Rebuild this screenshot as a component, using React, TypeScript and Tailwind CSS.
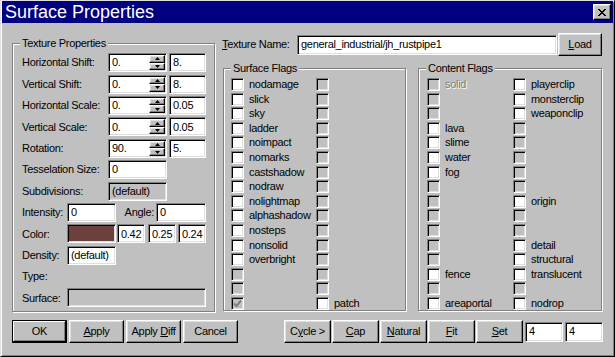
import type { ReactNode } from 'react';

// win95 bevels
const sunken =
  'border border-t-[#808080] border-l-[#808080] border-r-white border-b-white shadow-[inset_1px_1px_0_#000,inset_-1px_-1px_0_#dfdfdf]';
const raised =
  'border border-t-white border-l-white border-r-black border-b-black shadow-[inset_-1px_-1px_0_#808080,inset_1px_1px_0_#dfdfdf]';

type Flag = { label?: string; enabled?: boolean; checked?: boolean };
const on = (label: string): Flag => ({ label, enabled: true });
const off: Flag = {};
const offs = (n: number): Flag[] => Array.from({ length: n }, () => off);

const surfaceLeft: Flag[] = [
  ...[
    'nodamage',
    'slick',
    'sky',
    'ladder',
    'noimpact',
    'nomarks',
    'castshadow',
    'nodraw',
    'nolightmap',
    'alphashadow',
    'nosteps',
    'nonsolid',
    'overbright',
  ].map(on),
  off,
  off,
  { checked: true },
];
const surfaceRight: Flag[] = [...offs(15), on('patch')];

const contentLeft: Flag[] = [
  { label: 'solid' },
  off,
  off,
  on('lava'),
  on('slime'),
  on('water'),
  on('fog'),
  ...offs(6),
  on('fence'),
  off,
  on('areaportal'),
];
const contentRight: Flag[] = [
  on('playerclip'),
  on('monsterclip'),
  on('weaponclip'),
  ...offs(5),
  on('origin'),
  off,
  off,
  on('detail'),
  on('structural'),
  on('translucent'),
  off,
  on('nodrop'),
];

function Field({ value = '', className = '', disabled = false }: { value?: string; className?: string; disabled?: boolean }) {
  return (
    <div
      className={`${sunken} ${disabled ? 'bg-[#c0c0c0]' : 'bg-white'} h-[19px] flex items-center pl-[3px] whitespace-nowrap overflow-hidden ${className}`}
    >
      {value}
    </div>
  );
}

function Arrow({ up }: { up?: boolean }) {
  return (
    <svg width="5" height="3" viewBox="0 0 5 3">
      <path d={up ? 'M2.5 0L5 3H0Z' : 'M0 0H5L2.5 3Z'} fill="#000" />
    </svg>
  );
}

function SpinField({ value }: { value: string }) {
  return (
    <div className={`${sunken} bg-white h-[19px] w-[59px] flex`}>
      <div className="flex-1 flex items-center pl-[3px]">{value}</div>
      <div className="w-[16px] flex flex-col py-px mr-px">
        <div className={`${raised} bg-[#c0c0c0] flex-1 flex items-center justify-center`}>
          <Arrow up />
        </div>
        <div className={`${raised} bg-[#c0c0c0] flex-1 flex items-center justify-center`}>
          <Arrow />
        </div>
      </div>
    </div>
  );
}

function Button({ children, className = '', isDefault = false }: { children: ReactNode; className?: string; isDefault?: boolean }) {
  const bevel = isDefault
    ? 'border border-black shadow-[inset_-1px_-1px_0_#000,inset_1px_1px_0_#fff,inset_-2px_-2px_0_#808080]'
    : raised;
  return (
    <div className={`${bevel} bg-[#c0c0c0] h-[23px] flex items-center justify-center ${className}`}>
      <span className="whitespace-pre">{children}</span>
    </div>
  );
}

function Group({ title, className = '', children }: { title: string; className?: string; children: ReactNode }) {
  return (
    <div className={`relative border border-[#808080] shadow-[inset_1px_1px_0_#fff,1px_1px_0_#fff] ${className}`}>
      <span className="absolute left-[7px] -top-[7px] bg-[#c0c0c0] px-[2px] leading-[13px]">{title}</span>
      {children}
    </div>
  );
}

function CheckBox({ flag, width }: { flag: Flag; width: string }) {
  return (
    <div className={`flex items-start gap-[5px] ${width}`}>
      <div className={`${sunken} ${flag.enabled ? 'bg-white' : 'bg-[#c0c0c0]'} w-[13px] h-[13px] shrink-0 flex items-center justify-center`}>
        {flag.checked && (
          <svg width="9" height="9" viewBox="0 0 9 9">
            <path d="M1 4.5L3.5 7L8 1.5" fill="none" stroke="#808080" strokeWidth="2" />
          </svg>
        )}
      </div>
      {flag.label && (
        <span className={`leading-[13px] whitespace-nowrap ${flag.enabled ? '' : 'text-[#808080] [text-shadow:1px_1px_0_#fff]'}`}>
          {flag.label}
        </span>
      )}
    </div>
  );
}

function FlagGrid({ left, right, colWidth, pad }: { left: Flag[]; right: Flag[]; colWidth: string; pad: string }) {
  return (
    <div className={`pt-[9px] ${pad} flex flex-col`}>
      {left.map((f, i) => (
        <div key={i} className="flex h-[14.6px]">
          <CheckBox flag={f} width={colWidth} />
          <CheckBox flag={right[i]} width="flex-1" />
        </div>
      ))}
    </div>
  );
}

function Row({ children }: { children: ReactNode }) {
  return <div className="flex items-center h-[21.4px]">{children}</div>;
}

export default function App() {
  const shifts = [
    ['Horizontal Shift:', '0.', '8.'],
    ['Vertical Shift:', '0.', '8.'],
    ['Horizontal Scale:', '0.', '0.05'],
    ['Vertical Scale:', '0.', '0.05'],
    ['Rotation:', '90.', '5.'],
  ];

  return (
    <div className="w-[615px] h-[357px] bg-[#c0c0c0] text-black text-[11px] tracking-[-0.3px] font-['Liberation_Sans',Arial,sans-serif] border border-t-[#dfdfdf] border-l-[#dfdfdf] border-r-black border-b-black shadow-[inset_1px_1px_0_#fff,inset_-1px_-1px_0_#808080] px-px pb-px flex flex-col overflow-hidden">
      {/* Title bar */}
      <div className="h-[22px] bg-[#000080] flex items-center justify-between pl-[3px] pr-[2px] shrink-0">
        <span className="text-white text-[18px] leading-none tracking-normal">Surface Properties</span>
        <div className={`${raised} bg-[#c0c0c0] w-[18px] h-[16px] flex items-center justify-center`}>
          <svg width="8" height="7" viewBox="0 0 8 7" shapeRendering="crispEdges">
            <path
              d="M0 0h2v1H0zM6 0h2v1H6zM1 1h2v1H1zM5 1h2v1H5zM2 2h4v1H2zM3 3h2v1H3zM2 4h4v1H2zM1 5h2v1H1zM5 5h2v1H5zM0 6h2v1H0zM6 6h2v1H6z"
              fill="#000"
            />
          </svg>
        </div>
      </div>

      <div className="flex">
        {/* Texture Properties */}
        <Group title="Texture Properties" className="ml-[10px] mt-[20px] w-[203px] h-[269px]">
          <div className="pt-[8px] pl-[9px] flex flex-col">
            {shifts.map(([label, a, b]) => (
              <Row key={label}>
                <span className="w-[86px]">{label}</span>
                <SpinField value={a} />
                <Field value={b} className="w-[37px] ml-[2px]" />
              </Row>
            ))}
            <Row>
              <span className="w-[86px]">Tesselation Size:</span>
              <Field value="0" className="w-[59px]" />
            </Row>
            <Row>
              <span className="w-[86px]">Subdivisions:</span>
              <Field value="(default)" className="w-[59px]" disabled />
            </Row>
            <Row>
              <span className="w-[45px]">Intensity:</span>
              <Field value="0" className="w-[49px]" />
              <span className="w-[40px] text-right pr-[2px]">Angle:</span>
              <Field value="0" className="w-[50px]" />
            </Row>
            <Row>
              <span className="w-[45px]">Color:</span>
              <div className={`${sunken} bg-[#6b403d] w-[49px] h-[19px]`} />
              <Field value="0.42" className="w-[28px] ml-px pl-[2px]" />
              <Field value="0.25" className="w-[28px] ml-[3px] pl-[2px]" />
              <Field value="0.24" className="w-[28px] ml-[2px] pl-[2px]" />
            </Row>
            <Row>
              <span className="w-[45px]">Density:</span>
              <Field value="(default)" className="w-[49px]" />
            </Row>
            <Row>
              <span>Type:</span>
            </Row>
            <Row>
              <span className="w-[45px]">Surface:</span>
              <Field className="w-[139px] h-[18px]" disabled />
            </Row>
          </div>
        </Group>

        {/* Right column */}
        <div className="ml-[7px] mt-[11px] w-[381px] flex flex-col">
          <div className="flex items-center h-[21px]">
            <span className="w-[75px]">
              <span className="underline">T</span>exture Name:
            </span>
            <Field value="general_industrial/jh_rustpipe1" className="w-[260px] h-[20px]" />
            <Button className="w-[44px] h-[21px] ml-px">
              <span className="underline">L</span>oad
            </Button>
          </div>

          <div className="flex gap-[12px] mt-[13px]">
            <Group title="Surface Flags" className="ml-px w-[183px] h-[243px]">
              <FlagGrid left={surfaceLeft} right={surfaceRight} colWidth="w-[85px]" pad="pl-[7px]" />
            </Group>
            <Group title="Content Flags" className="w-[184px] h-[243px]">
              <FlagGrid left={contentLeft} right={contentRight} colWidth="w-[86px]" pad="pl-[8px]" />
            </Group>
          </div>
        </div>
      </div>

      {/* Bottom buttons */}
      <div className="flex items-center justify-between mt-[8px] pl-[10px] pr-[10px]">
        <div className="flex gap-[2px]">
          <Button isDefault className="w-[55px]">OK</Button>
          <Button className="w-[55px]">
            <span className="underline">A</span>pply
          </Button>
          <Button className="w-[55px]">
            {'Apply '}
            <span className="underline">D</span>iff
          </Button>
          <Button className="w-[55px]">Cancel</Button>
        </div>
        <div className="flex items-center gap-px">
          <Button className="w-[47px]">
            C<span className="underline">y</span>cle &gt;
          </Button>
          <Button className="w-[47px]">
            <span className="underline">C</span>ap
          </Button>
          <Button className="w-[47px]">
            <span className="underline">N</span>atural
          </Button>
          <Button className="w-[47px]">
            <span className="underline">F</span>it
          </Button>
          <Button className="w-[47px]">
            <span className="underline">S</span>et
          </Button>
          <Field value="4" className="w-[38px] h-[20px] ml-px" />
          <Field value="4" className="w-[38px] h-[20px] ml-px" />
        </div>
      </div>
    </div>
  );
}
